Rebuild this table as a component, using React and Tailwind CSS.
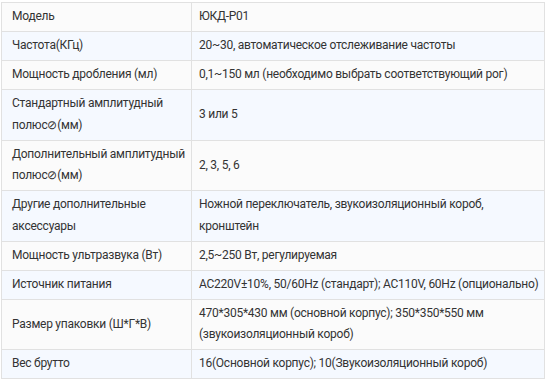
const rows = [
  ["Модель", "ЮКД-P01"],
  ["Частота(КГц)", "20~30, автоматическое отслеживание частоты"],
  ["Мощность дробления (мл)", "0,1~150 мл (необходимо выбрать соответствующий рог)"],
  [["Стандартный амплитудный", "полюс⊘(мм)"], "3 или 5"],
  [["Дополнительный амплитудный", "полюс⊘(мм)"], "2, 3, 5, 6"],
  [["Другие дополнительные", "аксессуары"], ["Ножной переключатель, звукоизоляционный короб,", "кронштейн"]],
  ["Мощность ультразвука (Вт)", "2,5~250 Вт, регулируемая"],
  ["Источник питания", "AC220V±10%, 50/60Hz (стандарт); AC110V, 60Hz (опционально)"],
  ["Размер упаковки (Ш*Г*В)", ["470*305*430 мм (основной корпус); 350*350*550 мм", "(звукоизоляционный короб)"]],
  ["Вес брутто", "16(Основной корпус); 10(Звукоизоляционный короб)"],
];

function Cell({ value, className }) {
  const lines = Array.isArray(value) ? value : [value];
  return (
    <td className={`border border-[#e1e1e1] align-middle whitespace-nowrap py-[3.25px] pr-0 leading-[21.5px] ${className}`}>
      {lines.map((line, i) => (
        <div key={i}>{line}</div>
      ))}
    </td>
  );
}

export default function App() {
  return (
    <div className="w-[552px] h-[381px] bg-white pt-[2px] pl-[1px] overflow-hidden">
      <table
        className="w-[544px] table-fixed border-collapse text-[12px] tracking-[-0.25px] text-[#333]"
        style={{ fontFamily: 'Roboto, "Liberation Sans", sans-serif' }}
      >
        <colgroup>
          <col className="w-[190px]" />
          <col />
        </colgroup>
        <tbody>
          {rows.map(([k, v], i) => (
            <tr key={i} className={i % 2 === 0 ? "bg-[#fbfbfb]" : "bg-[#f5f9ff]"}>
              <Cell value={k} className="pl-[10px]" />
              <Cell value={v} className="pl-[7px]" />
            </tr>
          ))}
        </tbody>
      </table>
    </div>
  );
}
